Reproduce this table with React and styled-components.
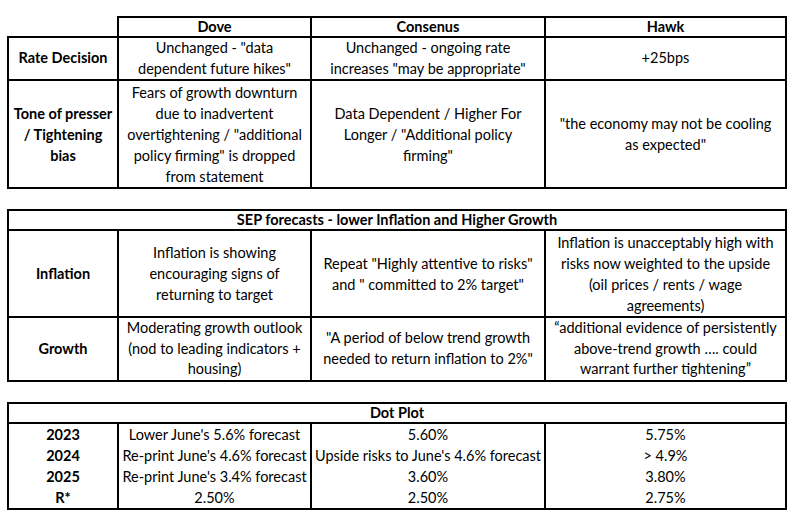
import React from "react";
import styled, { createGlobalStyle } from "styled-components";

const GlobalStyle = createGlobalStyle`
  body {
    margin: 0;
    background: #fff;
    font-family: Lato, "Open Sans", sans-serif;
    color: #000;
  }
`;

const Page = styled.div`
  display: flex;
  flex-direction: column;
  gap: 20px;
  padding: 16px 0 0 7px;
`;

const Table = styled.table`
  width: 778px;
  border-collapse: collapse;
  table-layout: fixed;
  font-size: 14.5px;
  border: ${(p) => (p.$open ? "none" : "2px solid #000")};
`;

const Cell = styled.td`
  border: 2px solid #000;
  border-top: ${(p) => (p.$flat ? "none" : "2px solid #000")};
  border-bottom: ${(p) => (p.$flat ? "none" : "2px solid #000")};
  padding: 0;
  height: ${(p) => p.$h || 21}px;
  line-height: ${(p) => p.$lh || 21}px;
  text-align: center;
  vertical-align: middle;
  white-space: nowrap;
  font-weight: ${(p) => (p.$bold ? 700 : 400)};
`;

const Blank = styled.td`
  border: none;
  padding: 0;
`;

const Line = styled.span`
  display: block;
`;

const Lines = ({ text }) =>
  (Array.isArray(text) ? text : [text]).map((t, i) => <Line key={i}>{t}</Line>);

const Cols = () => (
  <colgroup>
    <col style={{ width: 110 }} />
    <col style={{ width: 193 }} />
    <col style={{ width: 234 }} />
    <col style={{ width: 241 }} />
  </colgroup>
);

const policy = [
  {
    label: "Rate Decision",
    h: 41,
    lh: 20.5,
    cells: [
      ['Unchanged - "data', 'dependent future hikes"'],
      ["Unchanged - ongoing rate", 'increases "may be appropriate"'],
      "+25bps",
    ],
  },
  {
    label: ["Tone of presser", "/ Tightening", "bias"],
    h: 106,
    lh: 21,
    cells: [
      [
        "Fears of growth downturn",
        "due to inadvertent",
        'overtightening / "additional',
        'policy firming" is dropped',
        "from statement",
      ],
      ["Data Dependent / Higher For", 'Longer / "Additional policy', 'firming"'],
      ['"the economy may not be cooling', 'as expected"'],
    ],
  },
];

const sep = [
  {
    label: "Inflation",
    h: 85,
    lh: 21,
    cells: [
      ["Inflation is showing", "encouraging signs of", "returning to target"],
      ['Repeat "Highly attentive to risks"', 'and " committed to 2% target"'],
      [
        "Inflation is unacceptably high with",
        "risks now weighted to the upside",
        "(oil prices / rents / wage",
        "agreements)",
      ],
    ],
  },
  {
    label: "Growth",
    h: 62,
    lh: 20.7,
    cells: [
      ["Moderating growth outlook", "(nod to leading indicators +", "housing)"],
      ['"A period of below trend growth', 'needed to return inflation to 2%"'],
      [
        "\u201cadditional evidence of persistently",
        "above-trend growth \u2026. could",
        "warrant further tightening\u201d",
      ],
    ],
  },
];

const dots = [
  ["2023", "Lower June's 5.6% forecast", "5.60%", "5.75%"],
  ["2024", "Re-print June's 4.6% forecast", "Upside risks to June's 4.6% forecast", "> 4.9%"],
  ["2025", "Re-print June's 3.4% forecast", "3.60%", "3.80%"],
  ["R*", "2.50%", "2.50%", "2.75%"],
];

const BodyRows = ({ rows }) =>
  rows.map((row, i) => (
    <tr key={i}>
      <Cell $bold $h={row.h} $lh={row.lh}>
        <Lines text={row.label} />
      </Cell>
      {row.cells.map((c, j) => (
        <Cell key={j} $h={row.h} $lh={row.lh}>
          <Lines text={c} />
        </Cell>
      ))}
    </tr>
  ));

const Title = ({ children }) => (
  <tr>
    <Cell $bold $h={18} $lh={18} colSpan={4}>
      {children}
    </Cell>
  </tr>
);

export default function App() {
  return (
    <>
      <GlobalStyle />
      <Page>
        <Table $open>
          <Cols />
          <tbody>
            <tr>
              <Blank />
              <Cell $bold $h={18} $lh={18}>Dove</Cell>
              <Cell $bold $h={18} $lh={18}>Consenus</Cell>
              <Cell $bold $h={18} $lh={18}>Hawk</Cell>
            </tr>
            <BodyRows rows={policy} />
          </tbody>
        </Table>

        <Table>
          <Cols />
          <tbody>
            <Title>SEP forecasts - lower Inflation and Higher Growth</Title>
            <BodyRows rows={sep} />
          </tbody>
        </Table>

        <Table>
          <Cols />
          <tbody>
            <Title>Dot Plot</Title>
            {dots.map((row, i) => (
              <tr key={i}>
                {row.map((c, j) => (
                  <Cell key={j} $flat $bold={j === 0}>
                    {c}
                  </Cell>
                ))}
              </tr>
            ))}
          </tbody>
        </Table>
      </Page>
    </>
  );
}
